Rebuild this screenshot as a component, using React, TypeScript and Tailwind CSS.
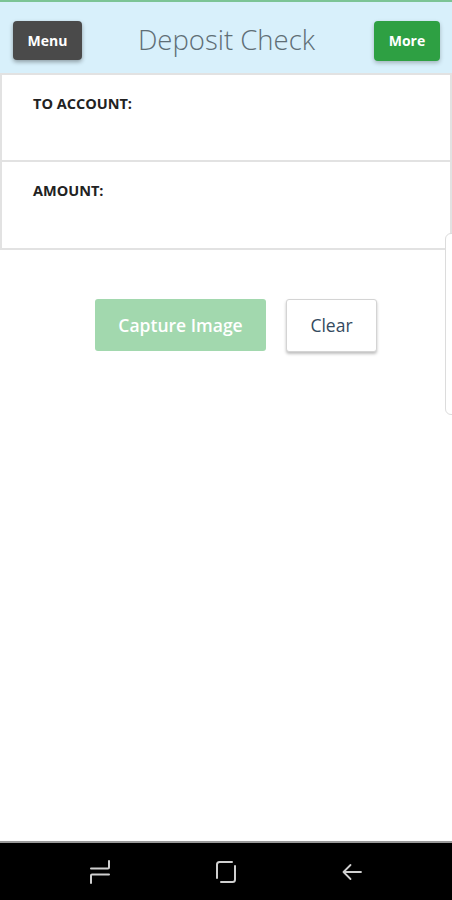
const App = () => {
  return (
    <div
      className="relative w-[452px] h-[900px] bg-white flex flex-col overflow-hidden"
      style={{ fontFamily: '"Open Sans", "Noto Sans", sans-serif' }}
    >
      {/* Header */}
      <div className="h-[2px] bg-[#7cc495]" />
      <div className="h-[71px] bg-[#d8f0fb] flex items-center justify-between pl-[13px] pr-[12px] pt-[6px]">
        <button className="w-[69px] h-[39px] rounded-[4px] bg-[#4a4a4a] text-white text-[14px] font-bold shadow-[0_2px_4px_rgba(0,0,0,0.35)]">
          Menu
        </button>
        <h1 className="text-[27.5px] font-light text-[#5f6e75] pr-[3px] pb-[2px]">Deposit Check</h1>
        <button className="w-[66px] h-[40px] rounded-[4px] bg-[#2ea043] text-white text-[14px] font-bold shadow-[0_2px_4px_rgba(0,0,0,0.25)]">
          More
        </button>
      </div>

      {/* Form sections */}
      <div className="border-t-2 border-[#e2e2e2]">
        <div className="h-[87px] border-x-2 border-b-2 border-[#e2e2e2] pl-[31px] pt-[16px]">
          <span className="text-[14.5px] font-bold text-[#222]">TO ACCOUNT:</span>
        </div>
        <div className="h-[88px] border-x-2 border-b-2 border-[#e2e2e2] pl-[31px] pt-[16px]">
          <span className="text-[14.5px] font-bold text-[#222]">AMOUNT:</span>
        </div>
      </div>

      {/* Actions */}
      <div className="flex justify-center gap-[20px] mt-[49px] pl-[20px]">
        <button className="w-[171px] h-[52px] rounded-[3px] bg-[#a2d8ae] text-white text-[17.5px] font-semibold">
          Capture Image
        </button>
        <button className="w-[91px] h-[53px] rounded-[3px] bg-white border border-[#d4d4d4] text-[#34495e] text-[17.5px] font-medium shadow-[0_2px_3px_rgba(0,0,0,0.25)]">
          Clear
        </button>
      </div>

      {/* Side tab */}
      <div className="absolute right-[-8px] top-[233px] w-[15px] h-[182px] rounded-l-[6px] border border-[#dcdcdc] bg-white" />

      {/* Android nav bar */}
      <div className="mt-auto h-[59px] bg-black border-t-2 border-[#9a9a9a] flex items-center justify-between px-[88px]">
        <svg width="24" height="24" viewBox="0 0 24 24" fill="none" stroke="#cfcfcf" strokeWidth="2" strokeLinecap="round" strokeLinejoin="round">
          <path d="M21 1 V7.5 Q21 8.5 20 8.5 H3" />
          <path d="M21 14.5 H4 Q3 14.5 3 15.5 V23" />
        </svg>
        <svg width="24" height="24" viewBox="0 0 24 24" fill="none" stroke="#cfcfcf" strokeWidth="2" strokeLinecap="round" strokeLinejoin="round">
          <path d="M18 2 H5.5 Q3 2 3 4.5 V18" />
          <path d="M21 6 V19.5 Q21 22 18.5 22 H7" />
        </svg>
        <svg width="24" height="24" viewBox="0 0 24 24" fill="none" stroke="#cfcfcf" strokeWidth="1.8" strokeLinecap="round" strokeLinejoin="round">
          <path d="M21 12 H3.5 M10.5 5 L3.5 12 L10.5 19" />
        </svg>
      </div>
    </div>
  );
};

export default App;
